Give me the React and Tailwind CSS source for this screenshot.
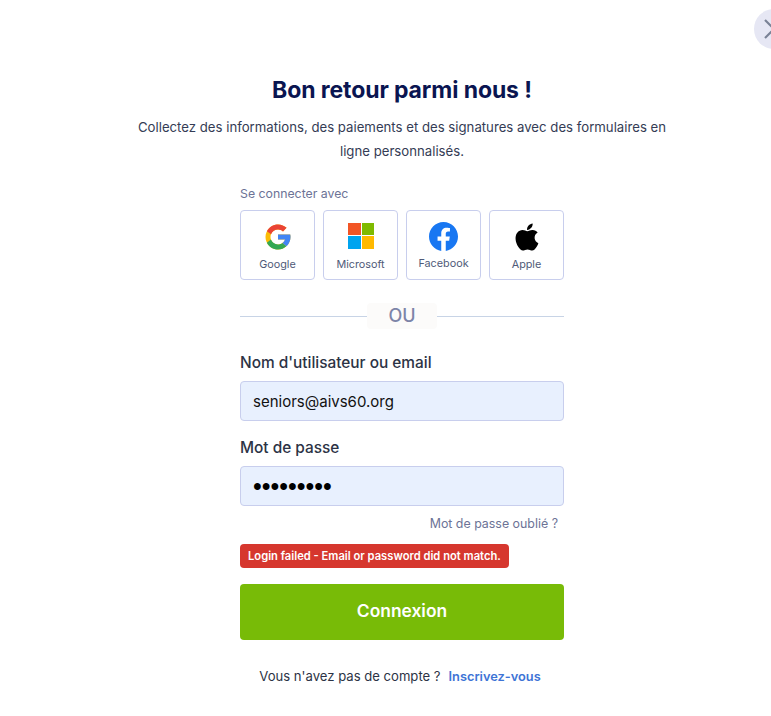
import React from 'react';

function GoogleIcon() {
  return (
    <svg viewBox="0 0 48 48" className="ml-[1px] h-[30px] w-[30px]">
      <path fill="#FBBC05" d="M43.6 20.1H42V20H24v8h11.3C33.7 32.7 29.2 36 24 36c-6.6 0-12-5.4-12-12s5.4-12 12-12c3.1 0 5.8 1.2 8 3l5.7-5.7C34 6.1 29.3 4 24 4 13 4 4 13 4 24s9 20 20 20 20-9 20-20c0-1.3-.1-2.7-.4-3.9z" />
      <path fill="#EA4335" d="M6.3 14.7l6.6 4.8C14.7 15.1 19 12 24 12c3.1 0 5.8 1.2 8 3l5.7-5.7C34 6.1 29.3 4 24 4 16.3 4 9.7 8.3 6.3 14.7z" />
      <path fill="#34A853" d="M24 44c5.2 0 9.9-2 13.4-5.2l-6.2-5.2C29.2 35.1 26.7 36 24 36c-5.2 0-9.6-3.3-11.3-7.9l-6.5 5C9.5 39.6 16.2 44 24 44z" />
      <path fill="#4285F4" d="M43.6 20.1H42V20H24v8h11.3c-.8 2.2-2.2 4.2-4.1 5.6l6.2 5.2C37 39.2 44 34 44 24c0-1.3-.1-2.7-.4-3.9z" />
    </svg>
  );
}

function MicrosoftIcon() {
  return (
    <div className="ml-[1px] mb-[2px] grid h-[26px] w-[26px] grid-cols-2 gap-[1px]">
      <div className="bg-[#f25525]" />
      <div className="bg-[#7fba00]" />
      <div className="bg-[#00a4ef]" />
      <div className="bg-[#ffb900]" />
    </div>
  );
}

function FacebookIcon() {
  return (
    <svg viewBox="0 0 24 24" className="h-[29px] w-[29px]">
      <path fill="#1877F2" d="M24 12.07C24 5.4 18.63 0 12 0S0 5.4 0 12.07c0 6.03 4.39 11.02 10.13 11.93v-8.44H7.08v-3.49h3.05V9.41c0-3.02 1.79-4.69 4.53-4.69 1.31 0 2.68.24 2.68.24v2.97h-1.51c-1.49 0-1.96.93-1.96 1.88v2.26h3.33l-.53 3.49h-2.8V24C19.61 23.09 24 18.1 24 12.07z" />
    </svg>
  );
}

function AppleIcon() {
  return (
    <svg viewBox="0 0 24 24" className="h-[36px] w-[36px] shrink-0">
      <path fill="#000" d="M17.05 20.28c-.98.95-2.05.8-3.08.35-1.09-.46-2.09-.48-3.24 0-1.44.62-2.2.44-3.06-.35C2.79 15.25 3.51 7.59 9.05 7.31c1.35.07 2.29.74 3.08.8 1.18-.24 2.31-.93 3.57-.84 1.51.12 2.65.72 3.4 1.8-3.12 1.87-2.38 5.98.48 7.13-.57 1.5-1.31 2.99-2.54 4.09zM12.03 7.25c-.15-2.23 1.66-4.07 3.74-4.25.29 2.58-2.34 4.5-3.74 4.25z" />
    </svg>
  );
}

function SocialButton({ label, icon, lift }) {
  return (
    <button className="flex h-[70px] w-[75px] flex-col items-center rounded border border-[#c8ceed] bg-white">
      <div className="mt-[11px] flex h-[29px] items-center justify-center">{icon}</div>
      <span className={`text-[10.8px] leading-[14px] text-[#4f5a78] ${lift ? 'mt-[6px]' : 'mt-[7px]'}`}>{label}</span>
    </button>
  );
}

export default function App() {
  return (
    <div className="relative h-[716px] overflow-hidden bg-white font-['Inter',sans-serif]">
      <button className="absolute left-[754px] top-[9px] flex h-10 w-10 items-center justify-center rounded-full bg-[#e6e7f4]">
        <svg viewBox="0 0 20 20" className="h-5 w-5" fill="none" stroke="#7a8296" strokeWidth="2.2">
          <path d="M1 1l18 18M19 1L1 19" />
        </svg>
      </button>

      <div className="flex w-[804px] flex-col items-center pt-[73px]">
        <h1 className="text-[23px] font-bold leading-[34px] tracking-[-0.1px] text-[#0a1551]">Bon retour parmi nous !</h1>
        <p className="mt-[8px] w-[540px] text-center text-[13.2px] leading-[24px] text-[#343c55]">
          Collectez des informations, des paiements et des signatures avec des formulaires en ligne personnalisés.
        </p>

        <div className="mt-[23px] w-[324px]">
          <div className="text-[12.3px] leading-[16px] text-[#6c7396]">Se connecter avec</div>
          <div className="mt-[8px] flex gap-2">
            <SocialButton label="Google" icon={<GoogleIcon />} />
            <SocialButton label="Microsoft" icon={<MicrosoftIcon />} />
            <SocialButton label="Facebook" icon={<FacebookIcon />} lift />
            <SocialButton label="Apple" icon={<AppleIcon />} />
          </div>

          <div className="mt-[23px] flex items-center">
            <div className="h-px flex-1 bg-[#c8d4e6]" />
            <span className="w-[70px] rounded bg-[#fcfbfa] text-center text-[18px] font-medium leading-[26px] text-[#7d84a8]">OU</span>
            <div className="h-px flex-1 bg-[#c8d4e6]" />
          </div>

          <label className="mt-[23px] block text-[15.4px] font-medium leading-[22px] text-[#2c3345]">Nom d'utilisateur ou email</label>
          <input
            readOnly
            value="seniors@aivs60.org"
            className="mt-[7px] block h-10 w-full rounded border border-[#c8ceed] bg-[#e8f0fe] px-3 text-[15px] text-[#111] outline-none"
          />

          <label className="mt-[16px] block text-[15.4px] font-medium leading-[22px] text-[#2c3345]">Mot de passe</label>
          <input
            readOnly
            type="password"
            value="123456789"
            className="mt-[7px] block h-10 w-full rounded border border-[#c8ceed] bg-[#e8f0fe] px-3 font-['Liberation_Sans',sans-serif] text-[25px] text-black outline-none"
          />

          <div className="mt-[10px] pr-[6px] text-right text-[12.4px] leading-[16px] text-[#6c7396]">Mot de passe oublié ?</div>

          <div className="mt-[12px] inline-block h-6 rounded-sm bg-[#d6372e] px-2 text-[11.2px] font-semibold leading-6 text-white">
            Login failed - Email or password did not match.
          </div>

          <button className="mt-[16px] block h-14 w-full rounded bg-[#78bb07] pb-[2px] text-[17.4px] font-semibold text-white">Connexion</button>

          <div className="mt-[27px] pr-[4px] text-center text-[13.1px] leading-[18px] text-[#2c3345]">
            Vous n'avez pas de compte ?
            <span className="ml-2 text-[12.8px] font-semibold text-[#3e74d6]">Inscrivez-vous</span>
          </div>
        </div>
      </div>
    </div>
  );
}
